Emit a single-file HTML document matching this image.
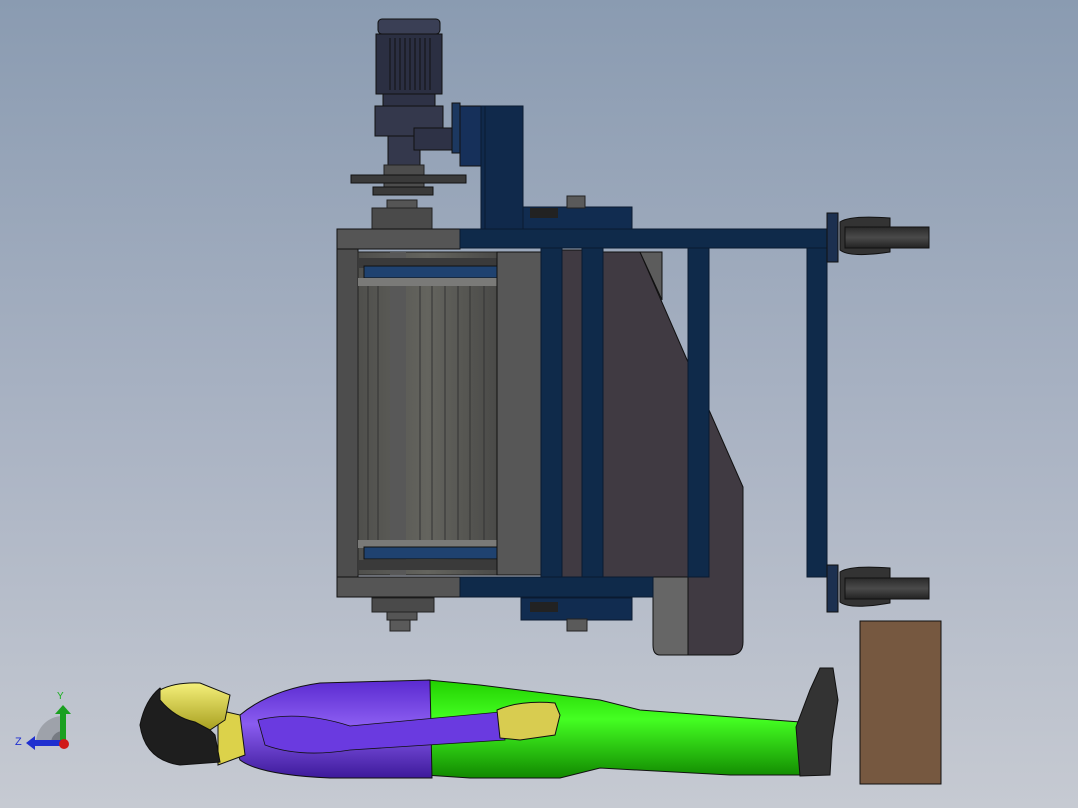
<!DOCTYPE html>
<html><head><meta charset="utf-8"><style>
html,body{margin:0;padding:0;width:1078px;height:808px;overflow:hidden}
svg{display:block}
</style></head><body>
<svg width="1078" height="808" viewBox="0 0 1078 808" xmlns="http://www.w3.org/2000/svg">
<defs>
<linearGradient id="bg" x1="0" y1="0" x2="0" y2="1">
<stop offset="0" stop-color="#8a9bb1"/><stop offset="0.55" stop-color="#abb4c4"/><stop offset="1" stop-color="#c6cad2"/>
</linearGradient>
<linearGradient id="roll" x1="0" y1="0" x2="1" y2="0">
<stop offset="0" stop-color="#4f4f4c"/><stop offset="0.5" stop-color="#64645e"/><stop offset="1" stop-color="#4a4a48"/>
</linearGradient>
<linearGradient id="purp" x1="0" y1="0" x2="0" y2="1">
<stop offset="0" stop-color="#5a2ad0"/><stop offset="0.45" stop-color="#8a5cf0"/><stop offset="1" stop-color="#3d1a9a"/>
</linearGradient>
<linearGradient id="grn" x1="0" y1="0" x2="0" y2="1">
<stop offset="0" stop-color="#22d000"/><stop offset="0.4" stop-color="#44ff22"/><stop offset="1" stop-color="#118800"/>
</linearGradient>
<linearGradient id="yel" x1="0" y1="0" x2="0" y2="1">
<stop offset="0" stop-color="#f5f07a"/><stop offset="1" stop-color="#a8a020"/>
</linearGradient>
<linearGradient id="wheel" x1="0" y1="0" x2="0" y2="1">
<stop offset="0" stop-color="#2a2a2a"/><stop offset="0.5" stop-color="#4a4a4a"/><stop offset="1" stop-color="#222"/>
</linearGradient>
</defs>
<rect width="1078" height="808" fill="url(#bg)"/>

<!-- motor -->
<rect x="378" y="19" width="62" height="15" rx="4" fill="#3a3f55" stroke="#111" stroke-width="1"/>
<rect x="376" y="34" width="66" height="60" fill="#2b2f42" stroke="#111"/>
<g stroke="#111" stroke-width="1">
<line x1="390" y1="38" x2="390" y2="90"/><line x1="395" y1="38" x2="395" y2="90"/><line x1="400" y1="38" x2="400" y2="90"/>
<line x1="405" y1="38" x2="405" y2="90"/><line x1="410" y1="38" x2="410" y2="90"/><line x1="415" y1="38" x2="415" y2="90"/><line x1="420" y1="38" x2="420" y2="90"/><line x1="425" y1="38" x2="425" y2="90"/><line x1="430" y1="38" x2="430" y2="90"/>
</g>
<rect x="383" y="94" width="52" height="12" fill="#2e3246" stroke="#111"/>
<rect x="375" y="106" width="68" height="30" fill="#34384c" stroke="#111"/>
<rect x="388" y="136" width="32" height="29" fill="#34384c" stroke="#111"/>
<rect x="414" y="128" width="42" height="22" fill="#2e3246" stroke="#111"/>
<rect x="452" y="103" width="8" height="50" fill="#1c3860" stroke="#111"/>
<rect x="460" y="106" width="22" height="60" fill="#16305a" stroke="#111"/>
<!-- upright blue -->
<rect x="481" y="106" width="42" height="123" fill="#10294b" stroke="#0a1a30"/>
<line x1="485" y1="106" x2="485" y2="229" stroke="#0a1a30"/>
<!-- sprockets -->
<rect x="384" y="165" width="40" height="30" fill="#4d4d4d" stroke="#222"/>
<rect x="351" y="175" width="115" height="8" fill="#3a3a3a" stroke="#111"/>
<rect x="373" y="187" width="60" height="8" fill="#3a3a3a" stroke="#111"/>
<rect x="387" y="200" width="30" height="8" fill="#555" stroke="#222"/>
<rect x="372" y="208" width="60" height="21" fill="#4a4a4a" stroke="#222"/>
<!-- top blue box -->
<rect x="523" y="207" width="109" height="22" fill="#112c50" stroke="#0a1a30"/>
<rect x="567" y="196" width="18" height="12" fill="#5a5a5a" stroke="#222"/>
<rect x="530" y="208" width="28" height="10" fill="#222"/>

<!-- dark plate -->
<path d="M603 252 L640 252 L688 362 L709 410 L743 487 L743 642 Q743 655 730 655 L688 655 L688 577 L603 577 Z" fill="#403a42" stroke="#111"/>
<path d="M640 252 L662 252 L662 300 Z" fill="#5c5c5c" stroke="#111"/>
<path d="M653 577 L688 577 L688 655 L660 655 Q653 655 653 645 Z" fill="#666" stroke="#111"/>
<rect x="562" y="250" width="20" height="327" fill="#403a42" stroke="#111"/>

<!-- top beams -->
<rect x="337" y="229" width="123" height="20" fill="#555" stroke="#111"/>
<rect x="460" y="229" width="370" height="19" fill="#0f2a4a" stroke="#0a1a30"/>
<!-- left frame -->
<rect x="337" y="249" width="21" height="328" fill="#4d4d4d" stroke="#111"/>
<!-- rollers -->
<rect x="358" y="252" width="139" height="323" fill="url(#roll)" stroke="#222"/>
<g stroke="#333" stroke-width="1">
<line x1="368" y1="285" x2="368" y2="540"/><line x1="378" y1="285" x2="378" y2="540"/><line x1="392" y1="285" x2="392" y2="540"/>
<line x1="405" y1="285" x2="405" y2="540"/><line x1="420" y1="285" x2="420" y2="540"/><line x1="432" y1="285" x2="432" y2="540"/>
<line x1="445" y1="285" x2="445" y2="540"/><line x1="458" y1="285" x2="458" y2="540"/><line x1="470" y1="285" x2="470" y2="540"/><line x1="484" y1="285" x2="484" y2="540"/>
</g>
<rect x="390" y="252" width="16" height="323" fill="#585858"/>
<rect x="358" y="258" width="139" height="10" fill="#3a3a3a"/>
<rect x="364" y="266" width="133" height="12" fill="#1f4270" stroke="#111"/>
<rect x="358" y="278" width="139" height="8" fill="#7a7a78"/>
<rect x="358" y="540" width="139" height="8" fill="#7a7a78"/>
<rect x="364" y="547" width="133" height="12" fill="#1f4270" stroke="#111"/>
<rect x="358" y="560" width="139" height="10" fill="#3a3a3a"/>
<!-- gray plate -->
<rect x="497" y="252" width="44" height="323" fill="#575757" stroke="#111"/>
<!-- blue verticals -->
<rect x="541" y="248" width="21" height="329" fill="#0f2a4a" stroke="#0a1a30"/>
<rect x="582" y="248" width="21" height="329" fill="#0f2a4a" stroke="#0a1a30"/>
<rect x="688" y="248" width="21" height="329" fill="#0f2a4a" stroke="#0a1a30"/>
<rect x="807" y="248" width="20" height="329" fill="#0f2a4a" stroke="#0a1a30"/>

<!-- bottom beams -->
<rect x="337" y="577" width="123" height="20" fill="#555" stroke="#111"/>
<rect x="460" y="577" width="193" height="20" fill="#0f2a4a" stroke="#0a1a30"/>
<rect x="521" y="598" width="111" height="22" fill="#112c50" stroke="#0a1a30"/>
<rect x="530" y="602" width="28" height="10" fill="#222"/>
<rect x="567" y="619" width="20" height="12" fill="#5a5a5a" stroke="#222"/>
<rect x="372" y="598" width="62" height="14" fill="#4a4a4a" stroke="#222"/>
<rect x="387" y="612" width="30" height="8" fill="#555" stroke="#222"/>
<rect x="390" y="620" width="20" height="11" fill="#5a5a5a" stroke="#222"/>

<!-- casters -->
<g>
<rect x="827" y="213" width="11" height="49" fill="#1c3050" stroke="#111"/>
<path d="M840 222 Q850 215 890 218 L890 252 Q850 258 840 250 Z" fill="#333" stroke="#111"/>
<rect x="845" y="227" width="84" height="21" fill="url(#wheel)" stroke="#111"/>
<rect x="827" y="565" width="11" height="47" fill="#1c3050" stroke="#111"/>
<path d="M840 572 Q850 565 890 568 L890 603 Q850 610 840 602 Z" fill="#333" stroke="#111"/>
<rect x="845" y="578" width="84" height="21" fill="url(#wheel)" stroke="#111"/>
</g>

<!-- brown box -->
<rect x="860" y="621" width="81" height="163" fill="#765840" stroke="#111"/>

<!-- human legs -->
<path d="M428 680 L480 685 L600 700 L640 710 L800 722 L810 735 L805 775 L730 775 L600 768 L560 778 L470 778 L425 775 Z" fill="url(#grn)" stroke="#111"/>
<path d="M796 727 L810 690 L820 668 L833 668 L838 700 L832 740 L830 775 L800 776 Z" fill="#333" stroke="#111"/>
<!-- torso -->
<path d="M240 715 Q270 690 320 683 L430 680 L432 778 L330 778 Q260 775 240 760 Q232 740 240 715 Z" fill="url(#purp)" stroke="#111"/>
<!-- arm -->
<path d="M258 720 Q300 710 350 726 L500 712 L505 740 L350 750 Q300 758 265 745 Z" fill="#6a3ae0" stroke="#111" stroke-width="0.8"/>
<path d="M497 710 Q520 700 555 703 L560 715 L555 735 L520 740 L500 738 Z" fill="#d8cc50" stroke="#111"/>
<!-- neck -->
<path d="M218 710 L240 715 L245 755 L218 765 Z" fill="#dcd24a" stroke="#111"/>
<!-- head -->
<path d="M160 688 Q145 700 140 725 Q145 760 180 765 L220 762 L215 735 L200 720 Q180 713 160 688 Z" fill="#1e1e1e" stroke="#111"/>
<path d="M160 690 Q175 682 200 683 L230 695 L225 720 L210 730 L195 722 Q175 718 160 700 Z" fill="url(#yel)" stroke="#111"/>

<!-- axis triad -->
<path d="M63 716 A27 27 0 0 0 36 743 L63 743 Z" fill="#9ea2aa"/>
<path d="M63 731 A12 12 0 0 0 51 743 L63 743 Z" fill="#777b82"/>
<rect x="60" y="712" width="6" height="31" fill="#1aa020"/>
<path d="M55 714 L63 705 L71 714 Z" fill="#1aa020"/>
<rect x="33" y="740" width="30" height="6" fill="#1f2fd0"/>
<path d="M35 736 L26 743 L35 750 Z" fill="#1f2fd0"/>
<circle cx="64" cy="744" r="5" fill="#d01818"/>
<text x="57" y="699" font-family="Liberation Sans, sans-serif" font-size="10" fill="#1ab020">Y</text>
<text x="15" y="745" font-family="Liberation Sans, sans-serif" font-size="11" fill="#1f2fd0">Z</text>
</svg>
</body></html>
